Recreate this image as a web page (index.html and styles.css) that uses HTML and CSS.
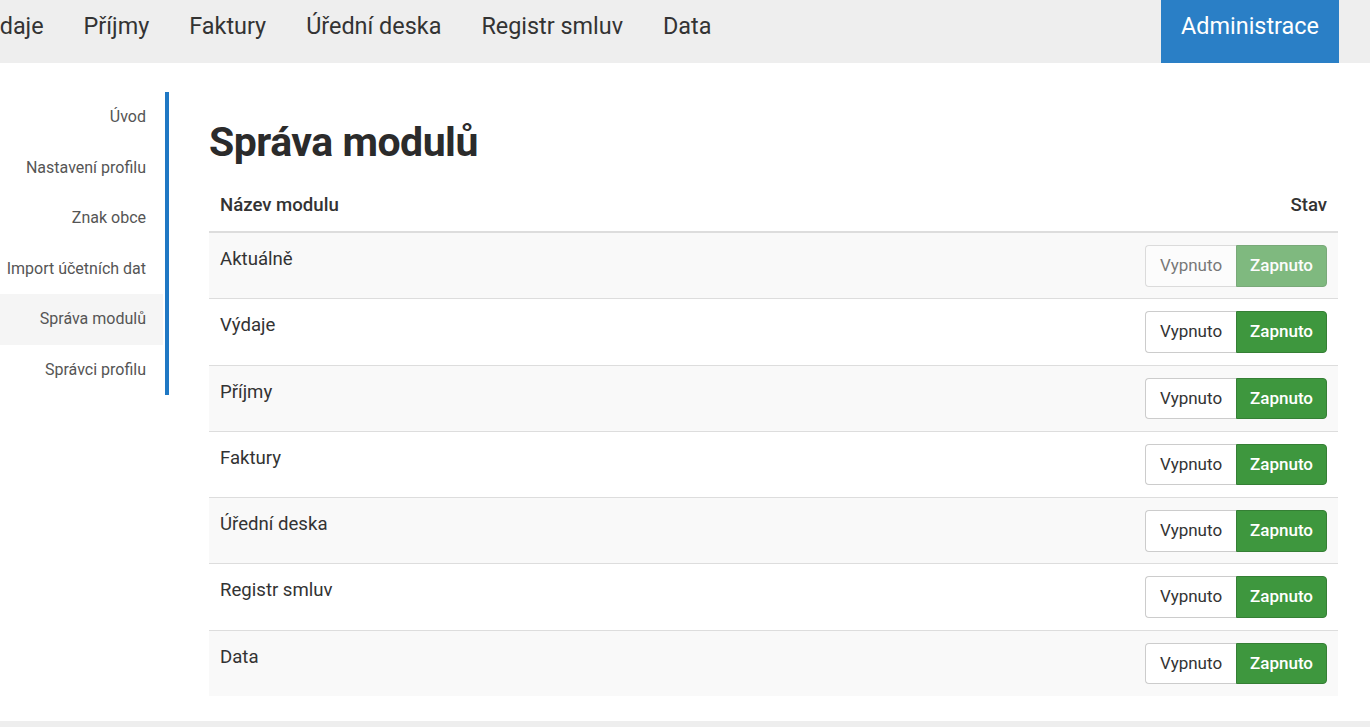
FILE: index.html
```html
<!DOCTYPE html>
<html lang="cs">
<head>
<meta charset="utf-8">
<title>Správa modulů</title>
<link rel="stylesheet" href="styles.css">
</head>
<body>
<header class="topbar">
  <nav class="mainnav">
    <a class="navlink" href="#">Výdaje</a>
    <a class="navlink" href="#">Příjmy</a>
    <a class="navlink" href="#">Faktury</a>
    <a class="navlink" href="#">Úřední deska</a>
    <a class="navlink" href="#">Registr smluv</a>
    <a class="navlink" href="#">Data</a>
  </nav>
  <a class="admin" href="#">Administrace</a>
</header>
<div class="layout">
  <aside class="sidebar">
    <ul class="sidemenu">
      <li class="sideitem"><a href="#">Úvod</a></li>
      <li class="sideitem"><a href="#">Nastavení profilu</a></li>
      <li class="sideitem"><a href="#">Znak obce</a></li>
      <li class="sideitem"><a href="#">Import účetních dat</a></li>
      <li class="sideitem active"><a href="#">Správa modulů</a></li>
      <li class="sideitem"><a href="#">Správci profilu</a></li>
    </ul>
  </aside>
  <main class="content">
    <h1 class="title">Správa modulů</h1>
    <table class="modtable">
      <thead>
        <tr><th class="col-name">Název modulu</th><th class="col-state">Stav</th></tr>
      </thead>
      <tbody>
        <tr><td>Aktuálně</td><td class="col-state"><div class="toggle disabled"><span class="btn off">Vypnuto</span><span class="btn on">Zapnuto</span></div></td></tr>
        <tr><td>Výdaje</td><td class="col-state"><div class="toggle"><span class="btn off">Vypnuto</span><span class="btn on">Zapnuto</span></div></td></tr>
        <tr><td>Příjmy</td><td class="col-state"><div class="toggle"><span class="btn off">Vypnuto</span><span class="btn on">Zapnuto</span></div></td></tr>
        <tr><td>Faktury</td><td class="col-state"><div class="toggle"><span class="btn off">Vypnuto</span><span class="btn on">Zapnuto</span></div></td></tr>
        <tr><td>Úřední deska</td><td class="col-state"><div class="toggle"><span class="btn off">Vypnuto</span><span class="btn on">Zapnuto</span></div></td></tr>
        <tr><td>Registr smluv</td><td class="col-state"><div class="toggle"><span class="btn off">Vypnuto</span><span class="btn on">Zapnuto</span></div></td></tr>
        <tr><td>Data</td><td class="col-state"><div class="toggle"><span class="btn off">Vypnuto</span><span class="btn on">Zapnuto</span></div></td></tr>
      </tbody>
    </table>
  </main>
</div>
<footer class="footer"></footer>
</body>
</html>
```
FILE: styles.css
```css
* { box-sizing: border-box; }
html, body { margin: 0; padding: 0; }
body {
  font-family: Roboto, "Liberation Sans", sans-serif;
  color: #333;
  background: #fff;
  overflow: hidden;
  width: 1370px;
}
a { text-decoration: none; color: inherit; }

.topbar {
  display: flex;
  height: 63px;
  background: #eeeeee;
  padding-right: 31px;
}
.mainnav {
  flex: 1;
  display: flex;
  margin-left: -46px;
}
.navlink {
  padding: 0 20px;
  font-size: 23.4px;
  line-height: 52px;
  color: #333;
}
.admin {
  width: 178px;
  background: #2a7fc6;
  color: #fff;
  font-size: 23.4px;
  line-height: 52px;
  text-align: center;
}

.layout {
  display: flex;
  padding-top: 28px;
}
.sidebar {
  width: 209px;
  flex: none;
}
.sidemenu {
  list-style: none;
  margin: 1px 0 0 0;
  padding: 0 2px 0 0;
  width: 169px;
  border-right: 4px solid #1f78c4;
}
.sideitem a {
  display: block;
  height: 50.5px;
  line-height: 50.5px;
  padding-right: 17px;
  text-align: right;
  font-size: 16px;
  color: #555;
}
.sideitem.active a { background: #f5f5f5; }

.content {
  flex: 1;
  padding-right: 32px;
}
.title {
  margin: 28px 0 16px 0;
  font-size: 41px;
  letter-spacing: -0.5px;
  line-height: 46px;
  font-weight: 700;
  color: #2b2b2b;
}
.modtable {
  width: 100%;
  border-collapse: collapse;
  font-size: 18.6px;
}
.modtable th {
  text-align: left;
  font-weight: 500;
  padding: 11px 11px 13px;
  line-height: 26px;
  border-bottom: 2px solid #dddddd;
}
.modtable th.col-state, .modtable td.col-state { text-align: right; }
.modtable td {
  padding: 13px 11px 10px;
  line-height: 26px;
  border-top: 1px solid #dddddd;
  vertical-align: top;
}
.modtable td.col-state { padding-top: 12px; padding-bottom: 11.8px; }
.modtable tbody tr:first-child td { border-top: 0; }
.modtable tbody tr:nth-child(odd) { background: #f9f9f9; }

.toggle {
  display: inline-flex;
  vertical-align: top;
}
.toggle.disabled { opacity: 0.65; }
.btn {
  width: 91px;
  height: 41.5px;
  line-height: 39.5px;
  font-size: 17px;
  text-align: center;
  border: 1px solid #cccccc;
}
.btn.off {
  background: #fff;
  color: #333;
  border-radius: 4px 0 0 4px;
  border-right: 0;
}
.btn.on {
  background: #3e973e;
  border-color: #357f35;
  color: #fff;
  font-weight: 500;
  border-radius: 0 4px 4px 0;
}

.footer {
  margin-top: 25px;
  height: 6px;
  background: #eeeeee;
}
```
